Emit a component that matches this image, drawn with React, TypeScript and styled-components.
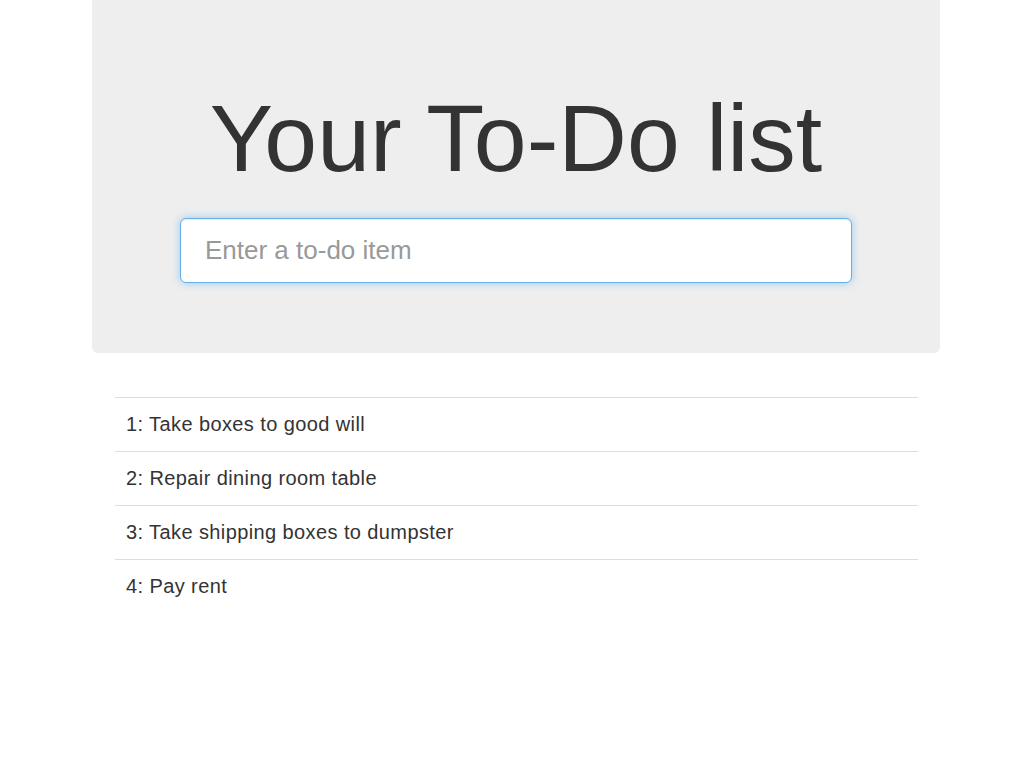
import styled, { createGlobalStyle } from "styled-components";

const GlobalStyle = createGlobalStyle`
  html, body {
    margin: 0;
    padding: 0;
    background: #fff;
  }
  body {
    font-family: "Liberation Sans", Arial, Helvetica, sans-serif;
    color: #333;
  }
  * { box-sizing: border-box; }
`;

const Page = styled.div`
  width: 848px;
  margin: 0 84px 0 92px;
`;

const Jumbotron = styled.header`
  background: #eee;
  border-radius: 0 0 6px 6px;
  padding: 86px 88px 70px;
  display: flex;
  flex-direction: column;
  align-items: stretch;
`;

const Title = styled.h1`
  margin: 0 0 27px;
  font-size: 95px;
  line-height: 1.1;
  font-weight: 400;
  text-align: center;
  color: #333;
`;

const TodoInput = styled.input`
  display: block;
  width: 100%;
  height: 65px;
  padding: 0 24px;
  font-family: inherit;
  font-size: 26px;
  color: #555;
  background: #fff;
  border: 1px solid #66afe9;
  border-radius: 6px;
  outline: none;
  box-shadow: inset 0 1px 1px rgba(0, 0, 0, 0.075), 0 0 8px rgba(102, 175, 233, 0.6);

  &::placeholder {
    color: #999;
  }
`;

const List = styled.ul`
  list-style: none;
  margin: 44px 22px 0 23px;
  padding: 0;
`;

const Item = styled.li`
  border-top: 1px solid #ddd;
  padding: 12px 11px;
  font-size: 20px;
  line-height: 29px;
  letter-spacing: 0.4px;
  color: #333;
`;

const todos = [
  "Take boxes to good will",
  "Repair dining room table",
  "Take shipping boxes to dumpster",
  "Pay rent",
];

export default function App() {
  return (
    <>
      <GlobalStyle />
      <Page>
        <Jumbotron>
          <Title>Your To-Do list</Title>
          <TodoInput placeholder="Enter a to-do item" />
        </Jumbotron>
        <List>
          {todos.map((t, i) => (
            <Item key={i}>
              {i + 1}: {t}
            </Item>
          ))}
        </List>
      </Page>
    </>
  );
}
